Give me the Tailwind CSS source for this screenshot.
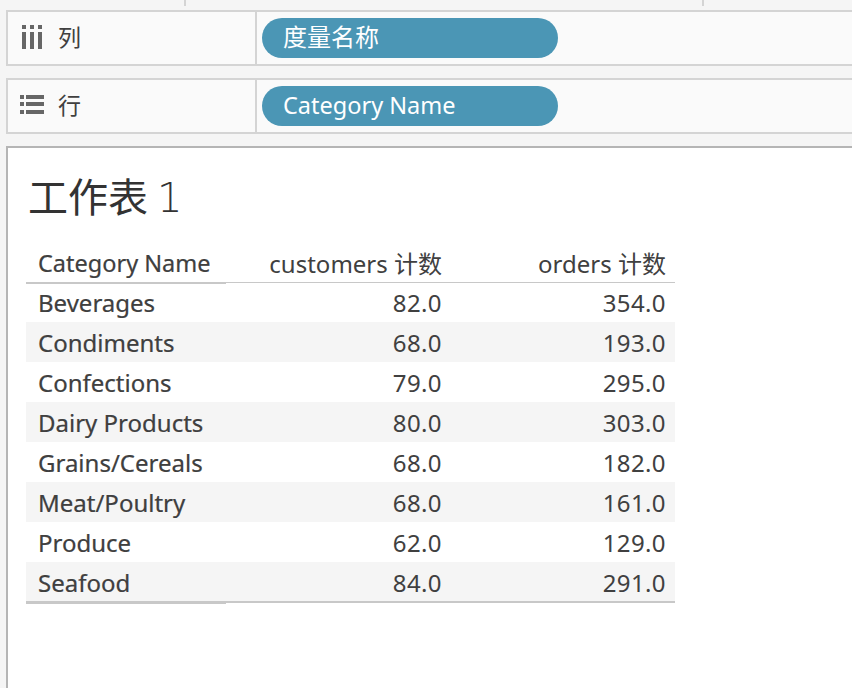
<!DOCTYPE html>
<html><head><meta charset="utf-8"><script src="https://cdn.jsdelivr.net/npm/@tailwindcss/browser@4"></script></head>
<body class="bg-[#f5f5f5] overflow-hidden font-['Noto_Sans','Noto_Sans_CJK_SC',sans-serif]">
<div class="w-[852px] h-[688px] overflow-hidden flex flex-col">
  <div class="h-[10px] relative shrink-0">
    <div class="absolute left-[184px] top-0 w-[2px] h-[6px] bg-[#d4d4d4]"></div>
    <div class="absolute left-[702px] top-0 w-[2px] h-[6px] bg-[#d4d4d4]"></div>
  </div>
  <div class="ml-[6px] h-[56px] shrink-0 flex bg-[#fafafa] border-y-2 border-l-2 border-[#d4d4d4]">
    <div class="w-[249px] flex items-center border-r-2 border-[#d4d4d4] text-[#404040] text-[23px]">
      <svg class="ml-[14px] mr-[14px]" width="22" height="26" viewBox="0 0 22 26" fill="#666"><rect x="0" y="0" width="4" height="4"/><rect x="8" y="0" width="4" height="4"/><rect x="16" y="0" width="4" height="4"/><rect x="0" y="7" width="4" height="17"/><rect x="8" y="7" width="4" height="17"/><rect x="16" y="7" width="4" height="17"/></svg>
      <span class="pb-[2px]">列</span>
    </div>
    <div class="pl-[5px] flex items-center"><div class="w-[296px] h-[40px] rounded-full bg-[#4b96b5] text-white text-[24px] pl-[21px] pb-[2px] flex items-center">度量名称</div></div>
  </div>
  <div class="mt-[12px] ml-[6px] h-[56px] shrink-0 flex bg-[#fafafa] border-y-2 border-l-2 border-[#d4d4d4]">
    <div class="w-[249px] flex items-center border-r-2 border-[#d4d4d4] text-[#404040] text-[23px]">
      <svg class="ml-[12px] mr-[14px] mb-[2px]" width="24" height="20" viewBox="0 0 24 20" fill="#666"><rect x="0" y="0" width="4" height="4"/><rect x="6" y="0" width="18" height="4"/><rect x="0" y="7" width="4" height="4"/><rect x="6" y="7" width="18" height="4"/><rect x="0" y="15" width="4" height="4"/><rect x="6" y="15" width="18" height="4"/></svg>
      <span class="pb-[2px]">行</span>
    </div>
    <div class="pl-[5px] flex items-center"><div class="w-[296px] h-[40px] rounded-full bg-[#4b96b5] text-white text-[23.5px] pl-[21px] flex items-center">Category Name</div></div>
  </div>
  <div class="mt-[12px] ml-[6px] flex-1 bg-white border-t-2 border-l-2 border-[#b5b5b5] pl-[18px]">
    <h1 class="h-[50px] text-[40px] leading-[50px] mt-[24px] ml-[2px] font-normal text-[#333] flex items-baseline"><span>工作表</span><span class="ml-[9px] font-['DejaVu_Sans'] font-extralight text-[40px] text-[#333]">1</span></h1>
    <div class="w-[649px] mt-[21px] text-[24px] text-[#404040]">
      <div class="relative h-[40px] pt-[2px] flex items-center border-b border-[#c8c8c8]">
        <div class="absolute left-0 bottom-[-2px] w-[200px] h-[2px] bg-[#c8c8c8]"></div>
        <span class="w-[200px] pl-[12px] text-[23.5px] [-webkit-text-stroke:0.2px_#333]">Category Name</span><span class="w-[216px] text-right">customers 计数</span><span class="w-[224px] text-right">orders 计数</span>
      </div>
      <div class="h-[39px] flex items-center"><span class="w-[200px] pl-[12px] [-webkit-text-stroke:0.2px_#333]">Beverages</span><span class="w-[216px] text-right tracking-[.4px]">82.0</span><span class="w-[224px] text-right tracking-[.4px]">354.0</span></div>
      <div class="h-[40px] flex items-center bg-[#f5f5f5]"><span class="w-[200px] pl-[12px] pt-[2px] [-webkit-text-stroke:0.2px_#333]">Condiments</span><span class="w-[216px] text-right tracking-[.4px] pt-[2px]">68.0</span><span class="w-[224px] text-right tracking-[.4px] pt-[2px]">193.0</span></div>
      <div class="h-[40px] flex items-center"><span class="w-[200px] pl-[12px] pt-[2px] [-webkit-text-stroke:0.2px_#333]">Confections</span><span class="w-[216px] text-right tracking-[.4px] pt-[2px]">79.0</span><span class="w-[224px] text-right tracking-[.4px] pt-[2px]">295.0</span></div>
      <div class="h-[40px] flex items-center bg-[#f5f5f5]"><span class="w-[200px] pl-[12px] pt-[2px] [-webkit-text-stroke:0.2px_#333]">Dairy Products</span><span class="w-[216px] text-right tracking-[.4px] pt-[2px]">80.0</span><span class="w-[224px] text-right tracking-[.4px] pt-[2px]">303.0</span></div>
      <div class="h-[40px] flex items-center"><span class="w-[200px] pl-[12px] pt-[2px] [-webkit-text-stroke:0.2px_#333]">Grains/Cereals</span><span class="w-[216px] text-right tracking-[.4px] pt-[2px]">68.0</span><span class="w-[224px] text-right tracking-[.4px] pt-[2px]">182.0</span></div>
      <div class="h-[40px] flex items-center bg-[#f5f5f5]"><span class="w-[200px] pl-[12px] pt-[2px] [-webkit-text-stroke:0.2px_#333]">Meat/Poultry</span><span class="w-[216px] text-right tracking-[.4px] pt-[2px]">68.0</span><span class="w-[224px] text-right tracking-[.4px] pt-[2px]">161.0</span></div>
      <div class="h-[40px] flex items-center"><span class="w-[200px] pl-[12px] pt-[2px] [-webkit-text-stroke:0.2px_#333]">Produce</span><span class="w-[216px] text-right tracking-[.4px] pt-[2px]">62.0</span><span class="w-[224px] text-right tracking-[.4px] pt-[2px]">129.0</span></div>
      <div class="relative h-[41px] flex items-center bg-[#f5f5f5] border-b-2 border-[#c8c8c8]"><div class="absolute left-0 bottom-[-3px] w-[200px] h-[1px] bg-[#c8c8c8]"></div><span class="w-[200px] pl-[12px] pt-[2px] [-webkit-text-stroke:0.2px_#333]">Seafood</span><span class="w-[216px] text-right tracking-[.4px] pt-[2px]">84.0</span><span class="w-[224px] text-right tracking-[.4px] pt-[2px]">291.0</span></div>
    </div>
  </div>
</div>
</body></html>
